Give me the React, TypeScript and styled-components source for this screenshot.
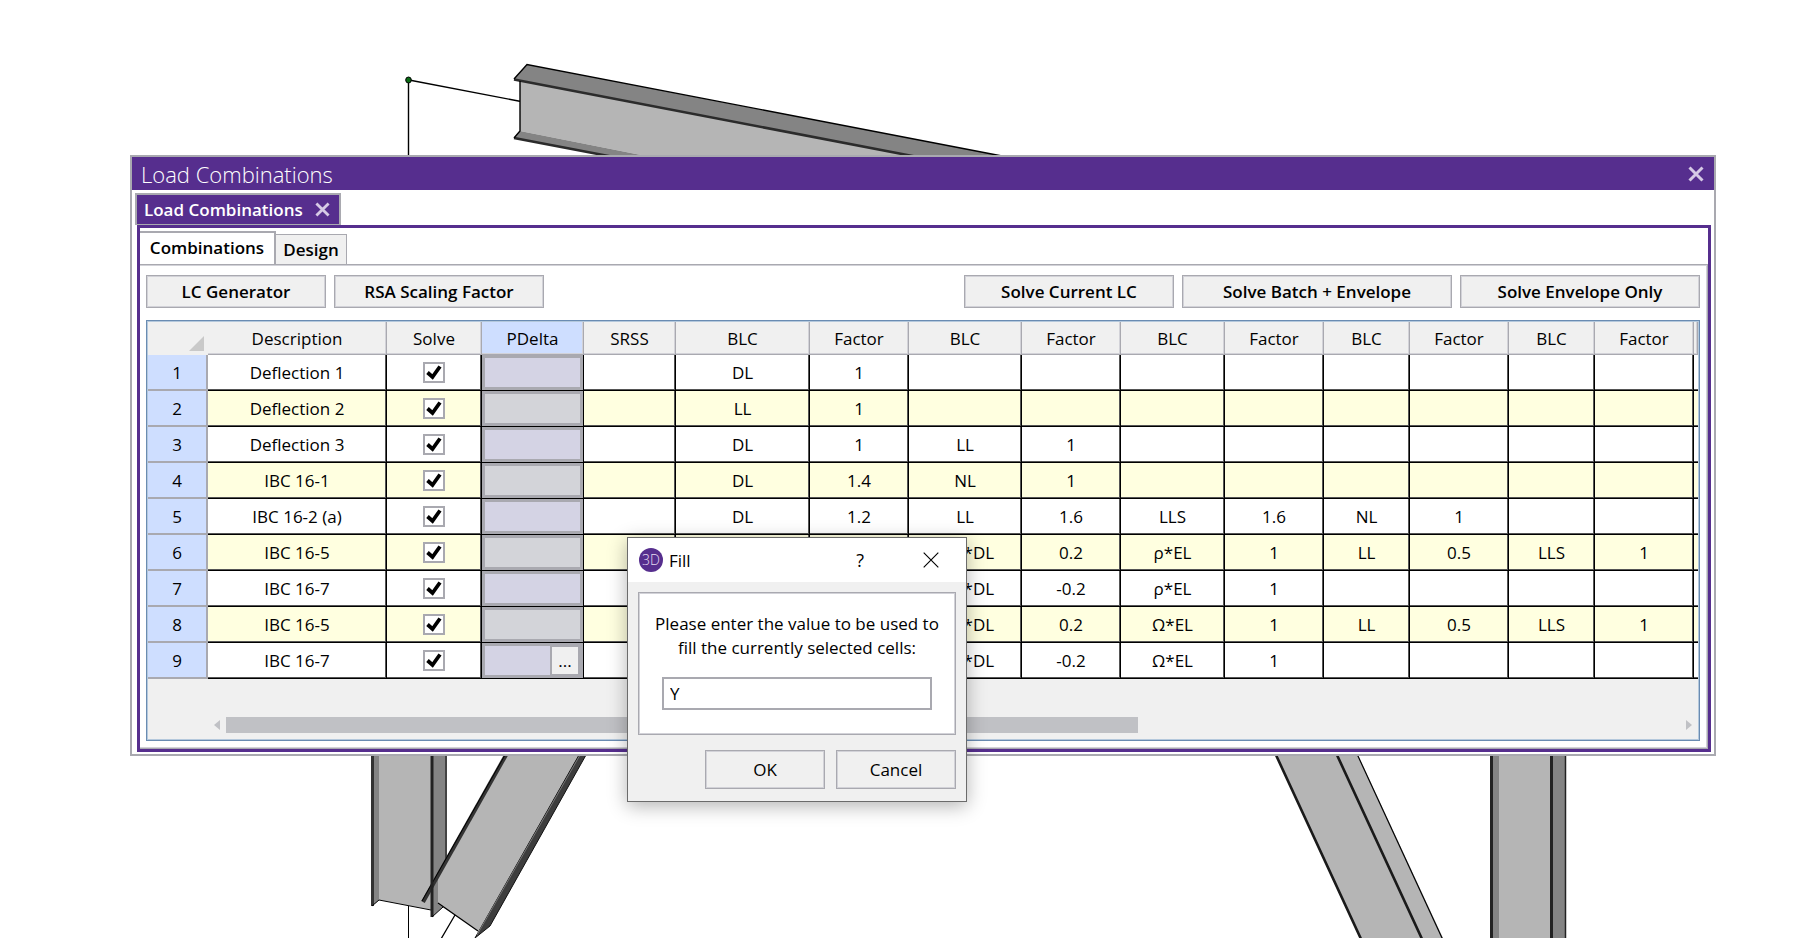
import React from "react";
import styled, { createGlobalStyle, css } from "styled-components";

const purple = "#562e8e";
const grey = "#a9a9b0";
const softGrey = "#d2d2d8";
const face = "#f0f0f0";

const GlobalStyle = createGlobalStyle`
  * { box-sizing: border-box; }
  body {
    margin: 0;
    overflow: hidden;
    background: #fff;
    color: #000;
    font-family: "Open Sans", "Noto Sans", sans-serif;
    font-size: 17px;
  }
  button, input { font: inherit; color: inherit; margin: 0; }
`;

const Workspace = styled.div`
  position: relative;
  min-height: 100vh;
  padding: 155px 81px 0 130px;
  overflow: hidden;
`;

const Scene = styled.svg`
  position: absolute;
  inset: 0;
  width: 100%;
  height: 100%;
`;

const Window = styled.section`
  position: relative;
  border: 2px solid ${grey};
  background: #fff;
`;

const TitleBar = styled.header`
  display: flex;
  align-items: center;
  justify-content: space-between;
  height: 33px;
  padding: 0 10px 0 9px;
  background: ${purple};
  color: #fff;
`;

const WindowTitle = styled.h1`
  margin: 0;
  padding-top: 2px;
  font-size: 22px;
  font-weight: 300;
  line-height: 31px;
`;

const IconButton = styled.button`
  display: flex;
  align-items: center;
  justify-content: center;
  padding: 0;
  border: 0;
  background: none;
`;

const WindowBody = styled.div`
  padding: 3px 3px 2px 5px;
`;

const DocumentTab = styled.div`
  display: flex;
  align-items: center;
  gap: 12px;
  width: max-content;
  height: 32px;
  margin-left: -2px;
  padding: 0 9px 0 7px;
  border: 2px solid ${grey};
  border-bottom-width: 1px;
  background: ${purple};
  color: #fff;
  font-weight: 600;
`;

const Frame = styled.div`
  border: 3px solid ${purple};
`;

const SubTabs = styled.div`
  display: flex;
  align-items: flex-end;
  height: 36px;
`;

const SubTab = styled.button<{ $active?: boolean }>`
  height: ${(p) => (p.$active ? 33 : 30)}px;
  width: ${(p) => (p.$active ? 136 : 71)}px;
  padding: 0 0 ${(p) => (p.$active ? 2 : 0)}px;
  border: 0 solid ${grey};
  border-width: ${(p) => (p.$active ? "2px 2px 0 0" : "1px 1px 0 0")};
  background: ${(p) => (p.$active ? "#fff" : face)};
  font-weight: 600;
  white-space: nowrap;
`;

const Pane = styled.div`
  border: solid ${grey};
  border-width: 1px 1px 1px 0;
  box-shadow: inset -1px 1px ${softGrey}, inset 0 -1px ${softGrey};
  padding: 10px 7px 7px 6px;
`;

const Toolbar = styled.div`
  display: flex;
  gap: 8px;
  margin-bottom: 12px;
`;

const PushButton = styled.button<{ $width: number; $tall?: boolean }>`
  width: ${(p) => p.$width}px;
  height: ${(p) => (p.$tall ? 39 : 33)}px;
  padding: 0;
  border: 1px solid ${grey};
  box-shadow: inset 0 0 0 1px ${softGrey};
  background: ${face};
  font-weight: ${(p) => (p.$tall ? 400 : 600)};
  white-space: nowrap;
`;

const Spacer = styled.span`
  flex: 1;
`;

const GridFrame = styled.div`
  border: 1px solid #6a8cb2;
  background: ${face};
  box-shadow: inset 0 0 0 1px #b4c8dc;
  padding: 1px;
  overflow: hidden;
`;

const Sheet = styled.table`
  width: 100%;
  table-layout: fixed;
  border-collapse: separate;
  border-spacing: 0;
`;

const ColumnHead = styled.th<{ $selected?: boolean }>`
  height: 33px;
  padding: 0;
  border: solid ${grey};
  border-width: 0 1px 1px 0;
  box-shadow: inset -1px -1px ${softGrey};
  background: ${(p) => (p.$selected ? "#cedeff" : face)};
  font-weight: 400;
`;

const Corner = styled.td`
  padding: 14px 4px 4px;
  height: 33px;
  vertical-align: bottom;
  svg { display: block; margin-left: auto; }
`;

const RowHead = styled.th`
  height: 36px;
  padding: 0;
  border: solid ${grey};
  border-width: 0 2px 2px 0;
  background: #cedeff;
  font-weight: 400;
`;

const Cell = styled.td<{ $tinted: boolean; $selected?: boolean }>`
  height: 36px;
  padding: 0;
  border: solid #000;
  border-width: 0 1px 1px 0;
  box-shadow: inset -1px -1px #555;
  background: ${(p) => (p.$tinted ? "#ffffe0" : "#fff")};
  line-height: 34px;
  text-align: center;
  white-space: nowrap;
  overflow: hidden;
  ${(p) =>
    p.$selected &&
    css`
      box-shadow: inset 0 0 0 3px ${grey};
      background: ${p.$tinted ? "#d3d4d9" : "#d4d3e4"};
    `}
  &:last-child {
    border-right-width: 0;
    box-shadow: inset 0 -1px #555;
  }
`;

const CheckBox = styled.label`
  display: flex;
  justify-content: center;
  input {
    appearance: none;
    width: 22px;
    height: 21px;
    border: 2px solid ${grey};
    background: #fff;
  }
  svg {
    position: absolute;
    margin-top: 3px;
  }
`;

const MoreButton = styled.button`
  display: block;
  width: 30px;
  height: 31px;
  margin: 0 3px 0 auto;
  padding: 0;
  border: 2px solid ${grey};
  background: ${face};
  line-height: 24px;
`;

const ScrollBar = styled.div`
  display: flex;
  align-items: center;
  margin: 38px 6px 6px 66px;
`;

const Track = styled.div`
  flex: 1;
  margin: 0 6px;
`;

const Thumb = styled.div`
  width: 62.7%;
  height: 16px;
  background: #c0c1c5;
`;

const Dialog = styled.section`
  position: absolute;
  left: 627px;
  top: 537px;
  width: 340px;
  border: 1px solid #6b6b6b;
  background: ${face};
  box-shadow: 0 4px 18px rgba(0, 0, 0, 0.3);
`;

const DialogBar = styled.header`
  display: flex;
  align-items: center;
  height: 44px;
  padding: 0 26px 0 11px;
  background: #fff;
`;

const DialogTitle = styled.h2`
  flex: 1;
  margin: 0 0 0 6px;
  font-size: 17px;
  font-weight: 400;
`;

const HelpButton = styled(IconButton)`
  margin-right: 58px;
  font-size: 18px;
`;

const DialogBody = styled.form`
  padding: 10px 10px 12px;
`;

const Group = styled.div`
  display: flex;
  flex-direction: column;
  align-items: center;
  gap: 17px;
  height: 143px;
  padding: 19px 8px 0;
  border: 1px solid ${grey};
  box-shadow: inset 0 0 0 1px ${softGrey};
  background: #fff;
`;

const Prompt = styled.label`
  line-height: 24px;
  text-align: center;
  white-space: nowrap;
`;

const ValueInput = styled.input`
  width: 270px;
  height: 33px;
  padding: 0 6px;
  border: 2px solid ${grey};
  background: #fff;
  outline: 0;
`;

const Actions = styled.div`
  display: flex;
  justify-content: flex-end;
  gap: 11px;
  margin-top: 15px;
`;

const columns: [string, number][] = [
  ["Description", 179],
  ["Solve", 95],
  ["PDelta", 102],
  ["SRSS", 92],
  ["BLC", 134],
  ["Factor", 99],
  ["BLC", 113],
  ["Factor", 99],
  ["BLC", 104],
  ["Factor", 99],
  ["BLC", 86],
  ["Factor", 99],
  ["BLC", 86],
  ["Factor", 99],
];

const rows: [string, string[]][] = [
  ["Deflection 1", ["DL", "1"]],
  ["Deflection 2", ["LL", "1"]],
  ["Deflection 3", ["DL", "1", "LL", "1"]],
  ["IBC 16-1", ["DL", "1.4", "NL", "1"]],
  ["IBC 16-2 (a)", ["DL", "1.2", "LL", "1.6", "LLS", "1.6", "NL", "1"]],
  ["IBC 16-5", ["", "", "Sds*DL", "0.2", "ρ*EL", "1", "LL", "0.5", "LLS", "1"]],
  ["IBC 16-7", ["", "", "Sds*DL", "-0.2", "ρ*EL", "1"]],
  ["IBC 16-5", ["", "", "Sds*DL", "0.2", "Ω*EL", "1", "LL", "0.5", "LLS", "1"]],
  ["IBC 16-7", ["", "", "Sds*DL", "-0.2", "Ω*EL", "1"]],
];

const Cross = ({ size, color, width }: { size: number; color: string; width: number }) => (
  <svg width={size} height={size} viewBox="0 0 16 16" fill="none" stroke={color} strokeWidth={width} aria-hidden>
    <path d="M1.5 1.5 14.5 14.5M14.5 1.5 1.5 14.5" />
  </svg>
);

const SteelFrame = () => (
  <Scene aria-hidden>
    <path d="M408.500 80V156M409 80 521 101.500" stroke="#000" strokeWidth="1.400" fill="none" />
    <ellipse cx="408.500" cy="80" rx="2.800" ry="3" fill="#0a6b14" stroke="#000" />
    <path d="M520 80 913 156H646L520 131Z" fill="#b5b5b5" />
    <path d="M520 131 646 156H608L514 138Z" fill="#848484" />
    <path d="M527 64.500 1002 156H913L514 79Z" fill="#848484" />
    <path d="M514 79.500 915 156.500" stroke="#2b2b2b" strokeWidth="2.600" />
    <path d="M514 138 611 156.500" stroke="#2b2b2b" strokeWidth="2.600" />
    <path d="M520 81V131L514 138M1002 156 527 64.500 514 79" fill="none" stroke="#000" strokeWidth="1.400" />

    <path d="M372 750H432V910L379 900 372 906Z" fill="#b5b5b5" />
    <path d="M372 750H379V900L372 906Z" fill="#848484" />
    <path d="M372.500 750V906" stroke="#333" strokeWidth="3" />
    <path d="M432 750H446V904L432 917Z" fill="#848484" />
    <path d="M446 750V862" stroke="#444" strokeWidth="2" />
    <path d="M372 906 379 900 431 910M408.500 906V938" fill="none" stroke="#000" />
    <path d="M506 755 438 877V904L479 931 495 914 585 755Z" fill="#b5b5b5" />
    <path d="M506 755 423 902" stroke="#333" strokeWidth="4" />
    <path d="M505 755 422 901" stroke="#000" strokeWidth="1" />
    <path d="M432 750V917" stroke="#222" strokeWidth="3" />
    <path d="M432 917 443 907" stroke="#000" />
    <path d="M579 755 586 755 490 926 475 938Z" fill="#3d3d3d" stroke="#111" />
    <path d="M580 755 477 935" stroke="#777" />
    <path d="M438 903 478 931M455 915 441 939" fill="none" stroke="#000" strokeWidth="1.300" />

    <path d="M1276 755H1358L1443 938H1361Z" fill="#b5b5b5" />
    <path d="M1276 755 1361 939M1337 755 1422 939" stroke="#1a1a1a" strokeWidth="2.600" />
    <path d="M1357.500 755 1442.500 939" stroke="#000" strokeWidth="1.200" />
    <path d="M1491 755H1566V938H1491Z" fill="#b5b5b5" />
    <path d="M1493 755H1499V938H1493ZM1552 755H1565V938H1552Z" fill="#848484" />
    <path d="M1491.500 755V938M1551.500 755V938" stroke="#222" strokeWidth="3" />
    <path d="M1565.500 755V938" stroke="#222" strokeWidth="1.500" />
  </Scene>
);

export default function App() {
  return (
    <>
      <GlobalStyle />
      <Workspace>
        <SteelFrame />
        <Window>
          <TitleBar>
            <WindowTitle>Load Combinations</WindowTitle>
            <IconButton aria-label="Close window">
              <Cross size={16} color="#d6cae6" width={3} />
            </IconButton>
          </TitleBar>
          <WindowBody>
            <DocumentTab>
              Load Combinations
              <IconButton aria-label="Close tab">
                <Cross size={15} color="#d6cae6" width={3} />
              </IconButton>
            </DocumentTab>
            <Frame>
              <SubTabs>
                <SubTab $active>Combinations</SubTab>
                <SubTab>Design</SubTab>
              </SubTabs>
              <Pane>
                <Toolbar>
                  <PushButton $width={180}>LC Generator</PushButton>
                  <PushButton $width={210}>RSA Scaling Factor</PushButton>
                  <Spacer />
                  <PushButton $width={210}>Solve Current LC</PushButton>
                  <PushButton $width={270}>Solve Batch + Envelope</PushButton>
                  <PushButton $width={240}>Solve Envelope Only</PushButton>
                </Toolbar>
                <GridFrame>
                  <Sheet>
                    <colgroup>
                      <col width={60} />
                      {columns.map(([, width], i) => (
                        <col key={i} width={width} />
                      ))}
                      <col />
                    </colgroup>
                    <thead>
                      <tr>
                        <Corner>
                          <svg width="15" height="15" aria-hidden>
                            <path d="M15 0V15H0Z" fill="#c9c9c9" />
                          </svg>
                        </Corner>
                        {columns.map(([name], i) => (
                          <ColumnHead key={i} scope="col" $selected={name === "PDelta"}>
                            {name}
                          </ColumnHead>
                        ))}
                        <ColumnHead as="td" />
                      </tr>
                    </thead>
                    <tbody>
                      {rows.map(([description, values], r) => {
                        const tinted = r % 2 === 1;
                        return (
                          <tr key={r}>
                            <RowHead scope="row">{r + 1}</RowHead>
                            <Cell $tinted={tinted}>{description}</Cell>
                            <Cell $tinted={tinted}>
                              <CheckBox>
                                <input type="checkbox" defaultChecked aria-label={`Solve ${description}`} />
                                <svg width="16" height="15" viewBox="0 0 16 15" fill="none" stroke="#000" strokeWidth="3.800" aria-hidden>
                                  <path d="M1.500 7.500 6.500 12 14 1.500" />
                                </svg>
                              </CheckBox>
                            </Cell>
                            <Cell $tinted={tinted} $selected>
                              {r === rows.length - 1 && <MoreButton aria-label="More">...</MoreButton>}
                            </Cell>
                            <Cell $tinted={tinted} />
                            {Array.from({ length: 10 }, (_, c) => (
                              <Cell key={c} $tinted={tinted}>
                                {values[c]}
                              </Cell>
                            ))}
                            <Cell $tinted={tinted} />
                          </tr>
                        );
                      })}
                    </tbody>
                  </Sheet>
                  <ScrollBar>
                    <svg width="6" height="10" aria-hidden>
                      <path d="M6 0V10L0 5Z" fill="#c0c1c5" />
                    </svg>
                    <Track>
                      <Thumb />
                    </Track>
                    <svg width="6" height="10" aria-hidden>
                      <path d="M0 0V10L6 5Z" fill="#c0c1c5" />
                    </svg>
                  </ScrollBar>
                </GridFrame>
              </Pane>
            </Frame>
          </WindowBody>
        </Window>

        <Dialog role="dialog" aria-labelledby="fill-title">
          <DialogBar>
            <svg width="24" height="24" aria-hidden>
              <circle cx="12" cy="12" r="12" fill={purple} />
              <text x="12" y="17" fill="#e6dcf2" fontSize="14" fontWeight="300" textAnchor="middle">3D</text>
            </svg>
            <DialogTitle id="fill-title">Fill</DialogTitle>
            <HelpButton aria-label="Help">?</HelpButton>
            <IconButton aria-label="Close dialog">
              <Cross size={18} color="#000" width={1} />
            </IconButton>
          </DialogBar>
          <DialogBody onSubmit={(e) => e.preventDefault()}>
            <Group>
              <Prompt htmlFor="fill-value">
                Please enter the value to be used to
                <br />
                fill the currently selected cells:
              </Prompt>
              <ValueInput id="fill-value" defaultValue="Y" />
            </Group>
            <Actions>
              <PushButton $width={120} $tall>OK</PushButton>
              <PushButton $width={120} $tall type="button">Cancel</PushButton>
            </Actions>
          </DialogBody>
        </Dialog>
      </Workspace>
    </>
  );
}
